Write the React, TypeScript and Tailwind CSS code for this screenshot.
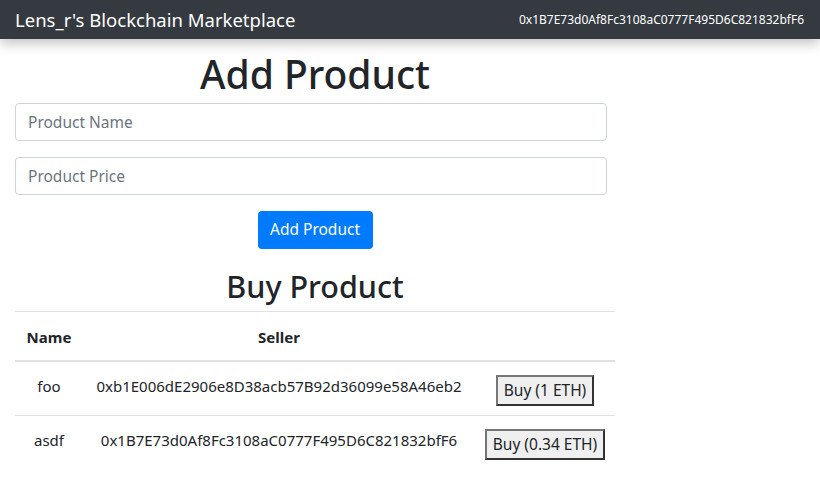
const products = [
  { name: "foo", seller: "0xb1E006dE2906e8D38acb57B92d36099e58A46eb2", price: "1" },
  { name: "asdf", seller: "0x1B7E73d0Af8Fc3108aC0777F495D6C821832bfF6", price: "0.34" },
];

const account = "0x1B7E73d0Af8Fc3108aC0777F495D6C821832bfF6";

const App = () => {
  return (
    <div className="min-h-screen bg-white font-['Noto_Sans',sans-serif] text-[#212529]">
      <nav className="flex h-[39px] items-center justify-between bg-[#343a40] pl-[15px] pr-[16px] shadow-[0_4px_12px_rgba(0,0,0,0.25)]">
        <span className="text-[18.5px] text-white">Lens_r's Blockchain Marketplace</span>
        <small className="text-[12px] text-white">{account}</small>
      </nav>
      <main className="w-[630px] px-[15px]">
        <h1 className="mt-[11px] mb-[5px] text-center text-[39px] font-medium leading-[48px]">Add Product</h1>
        <form className="w-[592px]">
          <input
            type="text"
            placeholder="Product Name"
            className="mb-4 block h-[38px] w-full rounded-[4px] border border-[#ced4da] px-3 text-[15.5px] placeholder:text-[#6c757d]"
          />
          <input
            type="text"
            placeholder="Product Price"
            className="mb-4 block h-[38px] w-full rounded-[4px] border border-[#ced4da] px-3 text-[15.5px] placeholder:text-[#6c757d]"
          />
        </form>
        <div className="flex justify-center">
          <button className="h-[38px] w-[115px] rounded-[4px] bg-[#007bff] text-[15.5px] text-white">Add Product</button>
        </div>
        <h2 className="mt-[17px] mb-[5px] text-center text-[30.5px] font-medium leading-[40px]">Buy Product</h2>
        <table className="w-[600px] border-collapse text-center text-[15px]">
          <thead>
            <tr className="border-t border-[#dee2e6]">
              <th className="w-[68px] border-b-2 border-[#dee2e6] pt-[14px] pb-[11px] font-bold">Name</th>
              <th className="border-b-2 border-[#dee2e6] pt-[14px] pb-[11px] font-bold">Seller</th>
              <th className="w-[140px] border-b-2 border-[#dee2e6] pt-[14px] pb-[11px]"></th>
            </tr>
          </thead>
          <tbody>
            {products.map((p, i) => (
              <tr key={p.name} className={i > 0 ? "border-t border-[#dee2e6]" : ""}>
                <td className="h-[55px] align-top pt-[13px]">{p.name}</td>
                <td className="align-top pt-[13px]">{p.seller}</td>
                <td className="align-top pt-[13px]">
                  <button className="border-2 border-t-[#767676] border-l-[#767676] border-r-[#333] border-b-[#333] bg-[#efefef] px-[6px] py-[1px] text-[15.5px] leading-[25px]">
                    Buy ({p.price} ETH)
                  </button>
                </td>
              </tr>
            ))}
          </tbody>
        </table>
      </main>
    </div>
  );
};

export default App;
